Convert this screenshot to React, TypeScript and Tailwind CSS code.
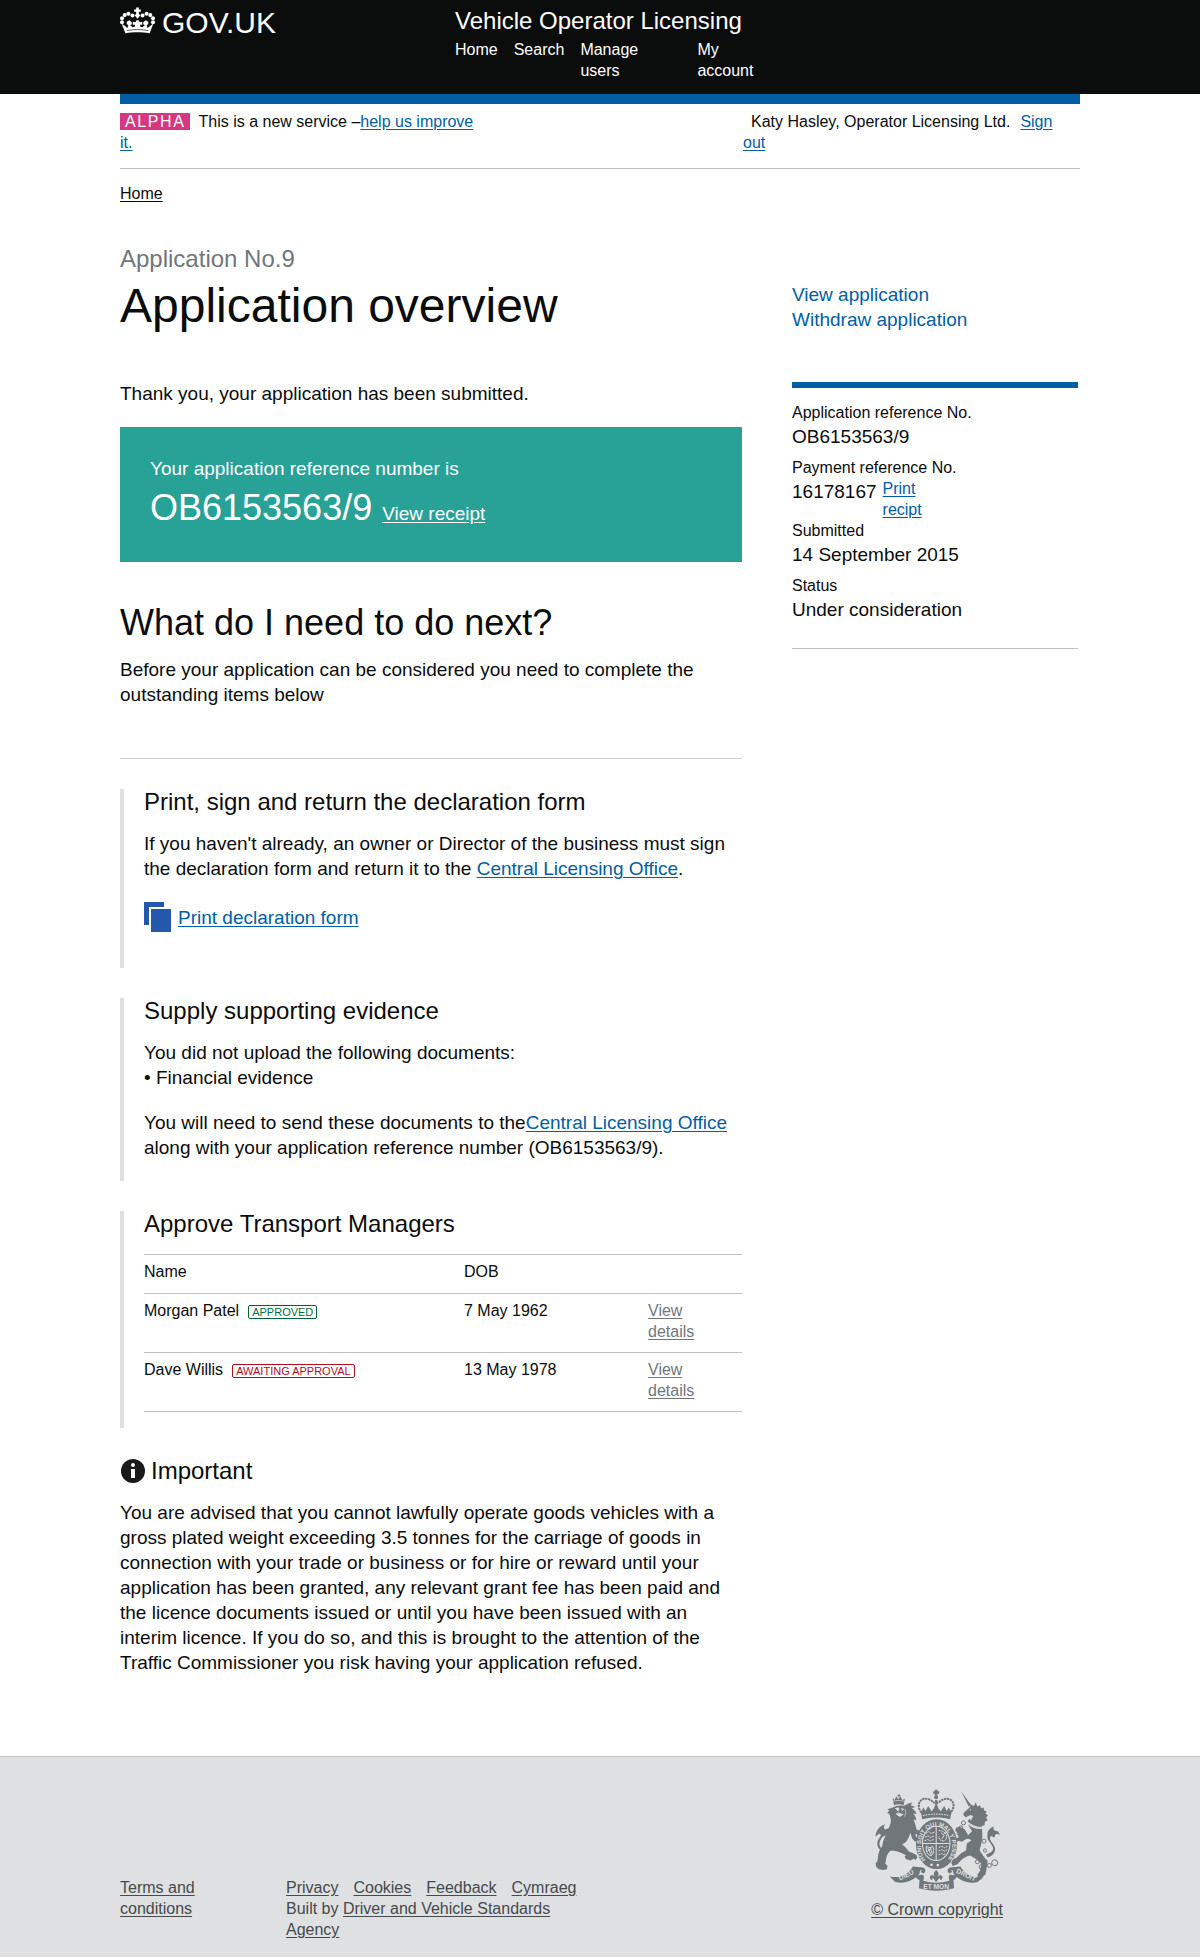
import type { ReactNode } from "react";

const linkBlue = "text-[#005ea5] underline underline-offset-2";

function CrownLogo() {
  return (
    <svg viewBox="60 22 104 80" className="h-[27px] w-[35px] shrink-0" fill="#fff" aria-hidden="true">
      <path d="M108 23h8v6h6v7h-6v5l4 6-8 10-8-10 4-6v-5h-6v-7h6z" />
      <circle cx="97" cy="47" r="6" />
      <circle cx="85" cy="42" r="6" />
      <circle cx="74" cy="46" r="6" />
      <circle cx="66" cy="55" r="6" />
      <circle cx="66" cy="67" r="6" />
      <circle cx="127" cy="47" r="6" />
      <circle cx="139" cy="42" r="6" />
      <circle cx="150" cy="46" r="6" />
      <circle cx="158" cy="55" r="6" />
      <circle cx="158" cy="67" r="6" />
      <path d="M76 100 65 72l8 5 9 7 3-9-5-2v-7l8-5 7 6v6l-5 3 8 6 7-2-2-6-5 1v-9l8 1 3-6h6l3 6 8-1v9l-5-1-2 6 7 2 8-6-5-3v-6l7-6 8 5v7l-5 2 3 9 9-7 8-5-11 28c-22-4-50-4-72 0z" />
      <path d="M80 92c21-4 43-4 64 0" fill="none" stroke="#0b0c0c" strokeWidth="2" />
    </svg>
  );
}

function RoyalArms() {
  const ink = "#6f777b";
  const paper = "#dee0e2";
  return (
    <svg viewBox="44 56 376 308" className="h-[103px] w-[125px]" fill={ink} aria-hidden="true">
      {/* lion */}
      <path d="M97 82l6 6 5-10 6 8 7-8 5 10 8-4-4 20c-9-4-20-4-29 0z" />
      <path d="M116 71v10M111 75h10" stroke={ink} strokeWidth="3" />
      <path d="M98 92c12-3 21-3 33 0" fill="none" stroke={paper} strokeWidth="2" />
      <path d="M98 111c8-6 22-8 33-5 8-4 16-9 26-10-4 4-5 6-5 9 5 0 9 2 12 6-5 0-8 1-9 3 7 3 12 9 14 16-5-2-8-2-9 0 5 6 8 12 8 20-4-3-6-4-8-3l5 14 4 16 9 4 6 10-8 3-10-4 1 9 12 4 6 9-5 4-6-4-10 1-8-9-6-17-3 10c-4 12-12 21-22 25 8 5 15 12 20 20l14 6 11 7 1 8-5 5-7-2-9 4-13-4-4-8 4-4-12-6c-12-5-23-8-33-8-8 6-13 14-14 23l-3 17 7 7-3 10-12 2-13-3-7-8-1-10 5-5 2-14c1-12 5-21 11-29l2-4c1-14 7-25 13-37l12-31c2-10-1-19-4-28l-6-3 6-7-6-4z" />
      <path d="M104 113l10-3 4 7-6 4zM122 112l10 3-6 6zM106 130l12-3 12 4-11 8z" fill={paper} />
      <path d="M112 118c5 5 4 8-4 11M134 116c4 8 3 16-2 22" stroke={paper} strokeWidth="2" fill="none" />
      <path d="M87 238c-17 6-31-2-33-16-2-18 14-22 16-37" fill="none" stroke={ink} strokeWidth="6" />
      <path d="M45 199c2-20 14-34 29-37-5 7-5 12 1 15l16-6c-6 18-17 29-30 28 2-6 0-9-5-9z" />
      {/* unicorn */}
      <path d="M303 62l30 41-7 5z" />
      <path d="M310 127l17-15 6-11 8 6 6-11 5 12 8-4 3 9 8-2 1 9 8 2-4 7 8 6-6 6 5 9-8 3-2 12c-14 2-30-5-41-14l7-15-8-3-14 7-6-5z" />
      <circle cx="331" cy="118" r="2" fill={paper} />
      <path d="M322 153l7-9 4 8 8-6 3 11 9-5 2 12 9-5 1 12c-15 1-31-5-43-18z" />
      <path d="M321 153c12 11 27 18 44 18" stroke={paper} strokeWidth="3" fill="none" />
      <path d="M323 160c12 11 27 17 43 15l1 22c-1 20-6 31-8 44l17 24 7 6-3 21-4 20-9 7-3 8-10-3-2-11 8-12 4-21-14-13-20-12c-12 2-21 8-29 16l-8 10-15 6-4-8 2-11 12-5 14-14 16-10 2-20 14-9c-6-6-12-7-17-4l-12 8-10-3-9 8-5-6 4-10 10-1-1-14-9-8 4-9 10-2 15 7 10 18 12-12z" />
      <path d="M378 252c22-7 25-16 18-27-8-13-15-17-14-31 0-14 9-23 19-25-2 7 0 10 4 12 8 0 12 5 15 12-7-4-12-3-15 1 1 8-7 7-11 2-7 5-4 14 4 23 15 18 6 35-15 42z" />
      <g fill="none" stroke={ink} strokeWidth="3">
        <circle cx="310" cy="157" r="6" />
        <circle cx="302" cy="172" r="6" />
        <circle cx="297" cy="188" r="6" />
        <circle cx="352" cy="274" r="6" />
        <circle cx="363" cy="289" r="6" />
        <circle cx="388" cy="285" r="6" />
        <circle cx="404" cy="277" r="9" />
        <circle cx="372" cy="212" r="6" />
        <circle cx="375" cy="240" r="5" />
      </g>
      {/* crown */}
      <path d="M224 57h8v5h5v7h-5v6h-8v-6h-5v-7h5z" />
      <circle cx="228" cy="80" r="6" />
      <path d="M184 126c-8-9-12-24-4-34 8-11 24-10 36 0 3 3 6 5 12 5s9-2 12-5c12-10 28-11 36 0 8 10 4 25-5 34" fill="none" stroke={ink} strokeWidth="6" strokeDasharray="7 2" />
      <path d="M228 88v36" stroke={ink} strokeWidth="7" strokeDasharray="6 2" />
      <path d="M182 124l8-13 6 10 8-15 10 16 6-7 8-17 8 17 6 7 10-16 8 15 6-10 8 13-4 22c-27-7-56-7-84 0z" />
      <path d="M188 135c27-6 53-6 80 0" fill="none" stroke={paper} strokeWidth="3" strokeDasharray="5 3" />
      {/* garter */}
      <ellipse cx="229" cy="221" rx="62" ry="75" />
      <ellipse cx="228" cy="219" rx="43" ry="53" fill={paper} />
      <ellipse cx="228" cy="219" rx="40" ry="50" />
      <path d="M228 168v102M187 219h82" stroke={paper} strokeWidth="3" />
      <g stroke={paper} strokeWidth="3" fill="none">
        <path d="M197 189l9-6 7 6 9-4M194 200l10-4 6 5 11-4M193 211l9-4 9 4 10-4" strokeDasharray="6 2" />
        <path d="M236 180c10 0 20 5 23 15s-3 16-10 16-13-4-13-13" strokeDasharray="5 2" />
        <path d="M243 187l9 8-7 10M257 185l-7 6" />
        <path d="M198 228c-1 16 4 25 15 28 8-7 9-17 5-28l-9 4zM203 233l10 20M210 231l6 18M201 243l12-9" />
        <path d="M236 231l9-4 8 5 9-4M235 242l10-4 8 4 8-4M235 253l9-4 7 4 6-4" strokeDasharray="6 2" />
      </g>
      <circle cx="214" cy="283" r="4" fill={paper} />
      <circle cx="233" cy="284" r="4" fill={paper} />
      <path id="garter-text" d="M196 268a47 59 0 1 1 66 0" fill="none" />
      <text fill={paper} fontSize="18" fontWeight="700" fontFamily="Liberation Sans, sans-serif">
        <textPath href="#garter-text">HONI SOIT QUI MAL Y PENSE</textPath>
      </text>
      {/* motto scroll */}
      <path d="M88 318c31 7 54-4 70-30l30 3c10 4 10 12 2 18l-9-4 5-7c-7 0-8 6-8 12-19 21-43 31-73 25z" />
      <path d="M371 318c-31 7-54-4-70-30l-31 3c-10 4-10 12-2 18l9-4-5-7c7 0 8 6 8 12 19 21 43 31 73 25z" />
      <path d="M163 309c10 9 15 5 22 4 6-1 8 7 4 18 25 8 52 8 79 0-4-11-2-19 4-18 7 1 13 4 22-4-2 10-8 17-14 20l2 25c-37 10-70 10-106 0l2-25c-8-3-13-10-15-20z" />
      <path d="M228 299c9 8 9 15 3 21 9-10 17-5 16 3-1 5-5 6-8 5 2-4 0-6-3-4-2 3-4 5-5 9h-6c-1-4-3-6-5-9-3-2-5 0-3 4-3 1-7 0-8-5-1-8 7-13 16-3-6-6-6-13 3-21z" />
      <g fill={paper} fontSize="20" fontWeight="700" fontFamily="Liberation Sans, sans-serif" textAnchor="middle">
        <text x="141" y="320" transform="rotate(-26 141 320)">DIEU</text>
        <text x="228" y="357">ET MON</text>
        <text x="315" y="320" transform="rotate(26 315 320)">DROIT</text>
      </g>
    </svg>
  );
}

function DocumentsIcon() {
  return (
    <svg viewBox="0 0 27 30" className="h-[30px] w-[27px] shrink-0" fill="#2458ac" aria-hidden="true">
      <path d="M0 0h20v5H5v18H0z" />
      <path d="M7 7h20v23H7z" />
    </svg>
  );
}

function InfoIcon() {
  return (
    <svg viewBox="0 0 24 24" className="h-6 w-6 shrink-0" aria-hidden="true">
      <circle cx="12" cy="12" r="12" fill="#1a1a1a" />
      <circle cx="12" cy="6" r="2" fill="#fff" />
      <path d="M10 10h4v9h-4z" fill="#fff" />
    </svg>
  );
}

function Task({ title, className, children }: { title: string; className: string; children: ReactNode }) {
  return (
    <section className={`mb-[30px] border-l-4 border-[#dee0e2] pl-5 ${className}`}>
      <h3 className="text-2xl leading-[26px]">{title}</h3>
      {children}
    </section>
  );
}

const managers = [
  { name: "Morgan Patel", status: "APPROVED", tone: "border-[#006435] text-[#00703c]", dob: "7 May 1962" },
  { name: "Dave Willis", status: "AWAITING APPROVAL", tone: "border-[#b10e1e] text-[#b10e1e]", dob: "13 May 1978" },
];

const details: [string, string][] = [
  ["Submitted", "14 September 2015"],
  ["Status", "Under consideration"],
];

export default function App() {
  return (
    <div className="bg-white font-['Liberation_Sans',Arial,sans-serif] text-[19px] leading-[25px] text-[#0b0c0c]">
      <header className="bg-[#0b0c0c] text-white">
        <div className="mx-auto flex max-w-[960px] pt-[6px] pb-[13px]">
          <a href="#" className="flex w-[335px] items-start gap-[7px] pt-px">
            <CrownLogo />
            <span className="text-3xl leading-8">GOV.UK</span>
          </a>
          <div>
            <a href="#" className="block text-2xl leading-[30px]">Vehicle Operator Licensing</a>
            <nav className="mt-[3px]">
              <ul className="flex gap-4 text-base leading-[21px]">
                <li><a href="#">Home</a></li>
                <li><a href="#">Search</a></li>
                <li className="w-[101px]"><a href="#" className="block w-20">Manage users</a></li>
                <li className="w-16"><a href="#">My account</a></li>
              </ul>
            </nav>
          </div>
        </div>
      </header>

      <div className="mx-auto max-w-[960px]">
        <div className="h-[10px] bg-[#005ea5]" />
        <div className="flex justify-between border-b border-[#bfc1c3] pt-[7px] pb-[15px] text-base leading-[21px]">
          <p className="w-[360px]">
            <strong className="mr-2 inline-block bg-[#d53880] px-[5px] font-normal leading-[17px] tracking-widest text-white">ALPHA</strong>
            This is a new service –<a href="#" className={linkBlue}>help us improve it.</a>
          </p>
          <p className="w-[337px] pr-3">
            <span className="mr-[10px] ml-2">Katy Hasley, Operator Licensing Ltd.</span>
            <a href="#" className={linkBlue}>Sign out</a>
          </p>
        </div>

        <nav className="pt-[14px] text-base leading-[21px]">
          <a href="#" className="underline underline-offset-2">Home</a>
        </nav>

        <div className="flex justify-between gap-[50px] pt-10">
          <main className="min-w-0 flex-1">
            <p className="text-2xl leading-[30px] text-[#6f777b]">Application No.9</p>
            <h1 className="mt-[7px] text-5xl leading-[50px]">Application overview</h1>
            <p className="mt-[50px]">Thank you, your application has been submitted.</p>

            <div className="mt-[21px] bg-[#28a197] px-[30px] pt-[29px] pb-[34px] text-white">
              <p>Your application reference number is</p>
              <p className="mt-[7px] flex items-baseline gap-[10px]">
                <span className="text-4xl">OB6153563/9</span>
                <a href="#" className="underline underline-offset-2">View receipt</a>
              </p>
            </div>

            <h2 className="mt-[41px] text-4xl">What do I need to do next?</h2>
            <p className="mt-[14px] border-b border-[#d0d1d2] pb-[51px]">
              Before your application can be considered you need to complete the outstanding items below
            </p>

            <div className="pt-[30px]">
              <Task title="Print, sign and return the declaration form" className="pb-9">
                <p className="mt-4">
                  If you haven't already, an owner or Director of the business must sign the declaration form and return it to the{" "}
                  <a href="#" className={linkBlue}>Central Licensing Office</a>.
                </p>
                <a href="#" className="mt-[21px] flex items-center gap-[7px]">
                  <DocumentsIcon />
                  <span className={linkBlue}>Print declaration form</span>
                </a>
              </Task>

              <Task title="Supply supporting evidence" className="pb-[21px]">
                <p className="mt-4">You did not upload the following documents:</p>
                <ul>
                  <li>• Financial evidence</li>
                </ul>
                <p className="mt-5">
                  You will need to send these documents to the<a href="#" className={linkBlue}>Central Licensing Office</a> along with your application reference number (OB6153563/9).
                </p>
              </Task>

              <Task title="Approve Transport Managers" className="pb-4">
                <table className="mt-[17px] w-full table-fixed border-t border-[#bfc1c3] text-left text-base leading-[21px]">
                  <thead>
                    <tr className="border-b border-[#bfc1c3]">
                      <th className="w-[320px] pt-[6px] pb-[11px] font-normal">Name</th>
                      <th className="w-[184px] pt-[6px] pb-[11px] font-normal">DOB</th>
                      <th aria-label="Actions" />
                    </tr>
                  </thead>
                  <tbody>
                    {managers.map((m) => (
                      <tr key={m.name} className="border-b border-[#bfc1c3] align-top">
                        <td className="pt-[6px] pb-[10px]">
                          {m.name}
                          <span className={`ml-[9px] inline-block rounded-xs border px-[3px] text-[11px] leading-3 ${m.tone}`}>{m.status}</span>
                        </td>
                        <td className="pt-[6px] pb-[10px]">{m.dob}</td>
                        <td className="pt-[6px] pr-8 pb-[10px]">
                          <a href="#" className="text-[#6f777b] underline underline-offset-2">View details</a>
                        </td>
                      </tr>
                    ))}
                  </tbody>
                </table>
              </Task>
            </div>

            <h3 className="flex items-center gap-[6px] pl-px text-2xl leading-[26px]">
              <InfoIcon />
              Important
            </h3>
            <p className="mt-4">
              You are advised that you cannot lawfully operate goods vehicles with a gross plated weight exceeding 3.5 tonnes for the carriage of goods in connection with your trade or business or for hire or reward until your application has been granted, any relevant grant fee has been paid and the licence documents issued or until you have been issued with an interim licence. If you do so, and this is brought to the attention of the Traffic Commissioner you risk having your application refused.
            </p>
          </main>

          <aside className="mr-[2px] w-[286px] pt-[38px]">
            <ul className="text-[#005ea5]">
              <li><a href="#">View application</a></li>
              <li><a href="#">Withdraw application</a></li>
            </ul>
            <dl className="mt-[50px] border-t-6 border-b border-t-[#005ea5] border-b-[#bfc1c3] pt-[14px] pb-[18px]">
              <dt className="text-base leading-[21px]">Application reference No.</dt>
              <dd className="mt-[1px] mb-2">OB6153563/9</dd>
              <dt className="text-base leading-[21px]">Payment reference No.</dt>
              <dd className="flex items-start gap-[6px]">
                <span className="pt-[1px]">16178167</span>
                <a href="#" className={`w-14 text-base leading-[21px] ${linkBlue}`}>Print recipt</a>
              </dd>
              {details.map(([label, value]) => (
                <div key={label} className="mb-2">
                  <dt className="text-base leading-[21px]">{label}</dt>
                  <dd className="mt-[1px]">{value}</dd>
                </div>
              ))}
            </dl>
          </aside>
        </div>
      </div>

      <footer className="mt-[81px] border-t border-[#bfc1c3] bg-[#dee0e2] text-base leading-[21px] text-[#454a4c]">
        <div className="mx-auto flex max-w-[960px] items-start pt-8 pb-[17px]">
          <a href="#" className="mt-[88px] mr-[66px] w-[100px] underline underline-offset-2">Terms and conditions</a>
          <div className="mt-[88px] w-[300px]">
            <ul className="flex gap-[15px]">
              <li><a href="#" className="underline underline-offset-2">Privacy</a></li>
              <li><a href="#" className="underline underline-offset-2">Cookies</a></li>
              <li><a href="#" className="underline underline-offset-2">Feedback</a></li>
              <li><a href="#" className="underline underline-offset-2">Cymraeg</a></li>
            </ul>
            <p className="w-[280px]">
              Built by <a href="#" className="underline underline-offset-2">Driver and Vehicle Standards Agency</a>
            </p>
          </div>
          <a href="#" className="mr-[77px] ml-auto flex flex-col items-center gap-[7px] underline underline-offset-2">
            <RoyalArms />
            © Crown copyright
          </a>
        </div>
      </footer>
    </div>
  );
}
